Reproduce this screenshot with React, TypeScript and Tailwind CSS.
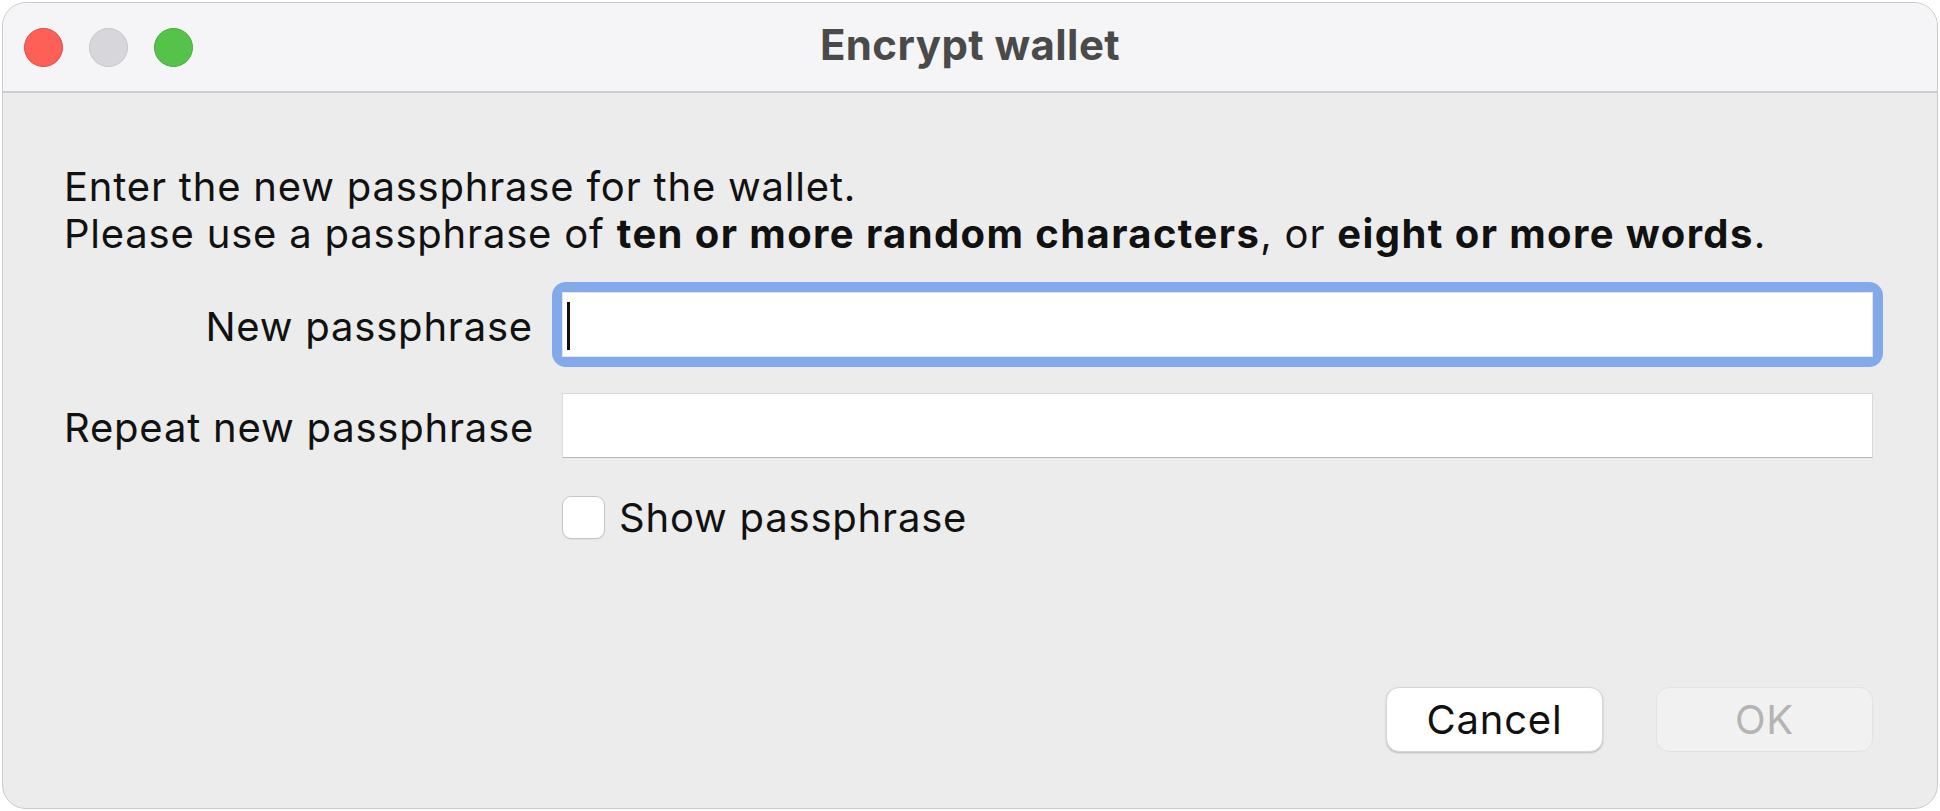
export default function App() {
  const font = { fontFamily: 'Inter, "Noto Sans", "Liberation Sans", sans-serif' };
  return (
    <div className="h-[811px] w-[1940px] bg-white p-[2px]" style={font}>
      <div className="flex h-full flex-col overflow-hidden rounded-[24px] border border-[#cbcbcb] bg-[#ececec]">
        {/* Title bar */}
        <div className="grid h-[90px] shrink-0 grid-cols-[1fr_auto_1fr] items-center border-b-2 border-[#cdcdcd] bg-[#f5f5f7]">
          <div className="flex items-center gap-[26px] pl-[21px]">
            <span className="h-[39px] w-[39px] rounded-full border border-[#e5473f] bg-[#fe5f57]" />
            <span className="h-[39px] w-[39px] rounded-full border border-[#c6c5c9] bg-[#d7d6da]" />
            <span className="h-[39px] w-[39px] rounded-full border border-[#45ad3b] bg-[#55c34a]" />
          </div>
          <div className="pb-[4px] text-[42px] font-bold leading-none tracking-[0.01em] text-[#4a4a4a]">
            Encrypt wallet
          </div>
          <div />
        </div>

        {/* Body */}
        <div className="flex flex-1 flex-col pb-[56px] pl-[61px] pr-[64px] pt-[70px] text-[40px] leading-[47px] tracking-[0.02em] text-[#111]">
          <div className="whitespace-nowrap">
            <p>Enter the new passphrase for the wallet.</p>
            <p>
              Please use a passphrase of{' '}
              <b className="font-bold tracking-[0.035em]">ten or more random characters</b>, or{' '}
              <b className="font-bold tracking-[0.035em]">eight or more words</b>.
            </p>
          </div>

          <div className="mt-[35px] grid grid-cols-[469px_1fr] items-center gap-x-[29px] gap-y-[36px]">
            <div className="whitespace-nowrap pt-[3px] text-right">New passphrase</div>
            <div className="-m-[10px] rounded-[14px] bg-[#82a9ea] p-[10px]">
              <div className="flex h-[65px] items-start border border-[#e4e4e4] bg-white pl-[4px] pt-[9px]">
                <span className="h-[48px] w-[3px] bg-[#111]" />
              </div>
            </div>

            <div className="whitespace-nowrap pt-[3px] text-right">Repeat new passphrase</div>
            <div className="h-[65px] border border-[#d9d9d9] border-b-[#b5b5b5] bg-white" />

            <div />
            <div className="flex items-center gap-[14px]">
              <span className="h-[43px] w-[43px] rounded-[9px] border border-[#c6c6c6] bg-white shadow-[0_1px_1px_rgba(0,0,0,0.06)]" />
              <span className="whitespace-nowrap">Show passphrase</span>
            </div>
          </div>

          <div className="mt-auto flex justify-end gap-[53px]">
            <button className="flex h-[65px] w-[217px] items-center justify-center rounded-[13px] border border-[#d6d6d6] bg-white text-[#111] shadow-[0_1px_2px_rgba(0,0,0,0.22)]">
              Cancel
            </button>
            <button className="flex h-[65px] w-[217px] items-center justify-center rounded-[13px] border border-[#e2e2e2] bg-[#f1f1f1] text-[#b4b4b4]">
              OK
            </button>
          </div>
        </div>
      </div>
    </div>
  );
}
